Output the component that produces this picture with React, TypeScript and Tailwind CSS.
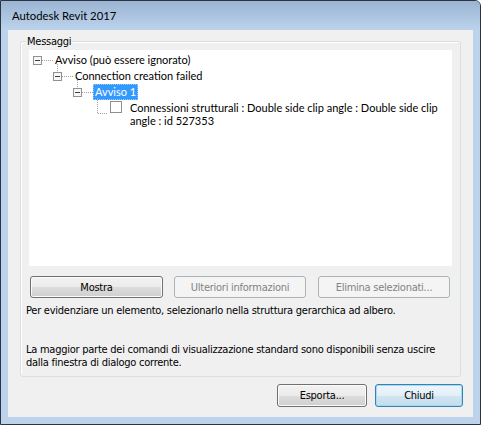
import React from 'react';

const tahoma = "font-['DejaVu_Sans_Condensed','Liberation_Sans',sans-serif] text-[11px] leading-[13px] whitespace-nowrap tracking-[-0.25px]";
const segoe = "font-['Lato','Liberation_Sans',sans-serif] text-[11px]";

type BtnKind = 'normal' | 'disabled' | 'default';

const Button: React.FC<{ label: string; kind?: BtnKind; className?: string }> = ({ label, kind = 'normal', className = '' }) => {
  const look =
    kind === 'disabled'
      ? 'border-[#adb2b5] bg-[#f4f4f4] text-[#838383]'
      : kind === 'default'
      ? 'border-[#3c7fb1] bg-[linear-gradient(#eef6fc_0%,#e3eff8_50%,#d2e4f1_50%,#c6dcec_100%)] shadow-[inset_0_0_0_1px_#9fdcf8] text-black'
      : 'border-[#707070] bg-[linear-gradient(#f2f2f2_0%,#ebebeb_50%,#dddddd_50%,#cfcfcf_100%)] shadow-[inset_0_0_0_1px_#fbfbfb] text-black';
  return (
    <div className={`flex items-center justify-center rounded-[3px] border ${look} ${tahoma} ${className}`}>
      {label}
    </div>
  );
};

// little [-] box plus dotted connectors of one tree row
const Expander: React.FC<{ stem?: boolean }> = ({ stem = true }) => (
  <svg width="20" height="16" className="shrink-0 overflow-visible">
    {stem && <line x1="4.5" y1="-4" x2="4.5" y2="4" stroke="#a0a0a0" strokeDasharray="1 1" />}
    <rect x="0.5" y="4.5" width="8" height="8" fill="#f7f7f7" stroke="#919191" />
    <line x1="2" y1="8.5" x2="7" y2="8.5" stroke="#404040" />
    <line x1="9" y1="8.5" x2="20" y2="8.5" stroke="#a0a0a0" strokeDasharray="1 1" />
  </svg>
);

const App: React.FC = () => {
  return (
    <div className="w-[481px] h-[425px] border border-[#2b3440] rounded-tr-[6px] bg-[#bdd3ec] flex flex-col overflow-hidden">
      {/* Title bar */}
      <div className="h-[29px] shrink-0 bg-[linear-gradient(#9ab4d3,#bcd3ec)] flex items-center pl-[11px] pt-[2px]">
        <span className="font-['Lato','Liberation_Sans',sans-serif] text-[11.3px] text-black">Autodesk Revit 2017</span>
      </div>

      {/* Client area */}
      <div className="mx-[7px] h-[387px] bg-[#f0f0f0] flex flex-col">
        {/* Group box */}
        <div className="relative mt-[11px] mx-[12px] h-[336px] border border-[#d5dfe5] rounded-[3px] shadow-[inset_1px_1px_0_#fff] flex flex-col">
          <span className={`absolute -top-[7px] left-[5px] px-[1px] bg-[#f0f0f0] text-black ${tahoma}`}>Messaggi</span>

          {/* Tree */}
          <div className={`mt-[8px] mx-[8px] h-[216px] bg-white pt-[2px] text-black ${segoe} leading-[16px] whitespace-nowrap`}>
            <div className="flex items-center h-[16px] pl-[4px]">
              <Expander stem={false} />
              <span className="px-[2px]">Avviso (può essere ignorato)</span>
            </div>
            <div className="flex items-center h-[16px] pl-[24px]">
              <Expander />
              <span className="px-[2px]">Connection creation failed</span>
            </div>
            <div className="flex items-center h-[16px] pl-[44px]">
              <Expander />
              <span className="px-[2px] bg-[#3399ff] text-white outline outline-1 outline-dotted outline-[#9cc9f5] -outline-offset-1">Avviso 1</span>
            </div>
            <div className="flex items-start pl-[64px]">
              <svg width="17" height="26" className="shrink-0 overflow-visible">
                <line x1="4.5" y1="-2" x2="4.5" y2="13" stroke="#a0a0a0" strokeDasharray="1 1" />
                <line x1="5" y1="13.5" x2="15" y2="13.5" stroke="#a0a0a0" strokeDasharray="1 1" />
              </svg>
              <div className="w-[12px] h-[12px] mt-[1px] border border-[#8f8f8f] bg-white shrink-0" />
              <div className="pl-[8px] leading-[13px] pt-[1px]">
                <div>Connessioni strutturali : Double side clip angle : Double side clip</div>
                <div>angle : id 527353</div>
              </div>
            </div>
          </div>

          {/* Buttons */}
          <div className="flex mt-[10px] ml-[9px]">
            <Button label="Mostra" className="w-[133px] h-[22px]" />
            <Button label="Ulteriori informazioni" kind="disabled" className="ml-[11px] w-[132px] h-[22px]" />
            <Button label="Elimina selezionati..." kind="disabled" className="ml-[12px] w-[132px] h-[22px]" />
          </div>

          <p className={`mt-[6px] pl-[5px] text-black ${tahoma}`}>
            Per evidenziare un elemento, selezionarlo nella struttura gerarchica ad albero.
          </p>
          <p className={`mt-[26px] pl-[5px] text-black ${tahoma}`}>
            La maggior parte dei comandi di visualizzazione standard sono disponibili senza uscire
            <br />
            dalla finestra di dialogo corrente.
          </p>
        </div>

        {/* Footer buttons */}
        <div className="flex justify-end gap-[8px] mt-[7px] pr-[10px]">
          <Button label="Esporta..." className="w-[90px] h-[23px]" />
          <Button label="Chiudi" kind="default" className="w-[88px] h-[23px]" />
        </div>
      </div>
    </div>
  );
};

export default App;
